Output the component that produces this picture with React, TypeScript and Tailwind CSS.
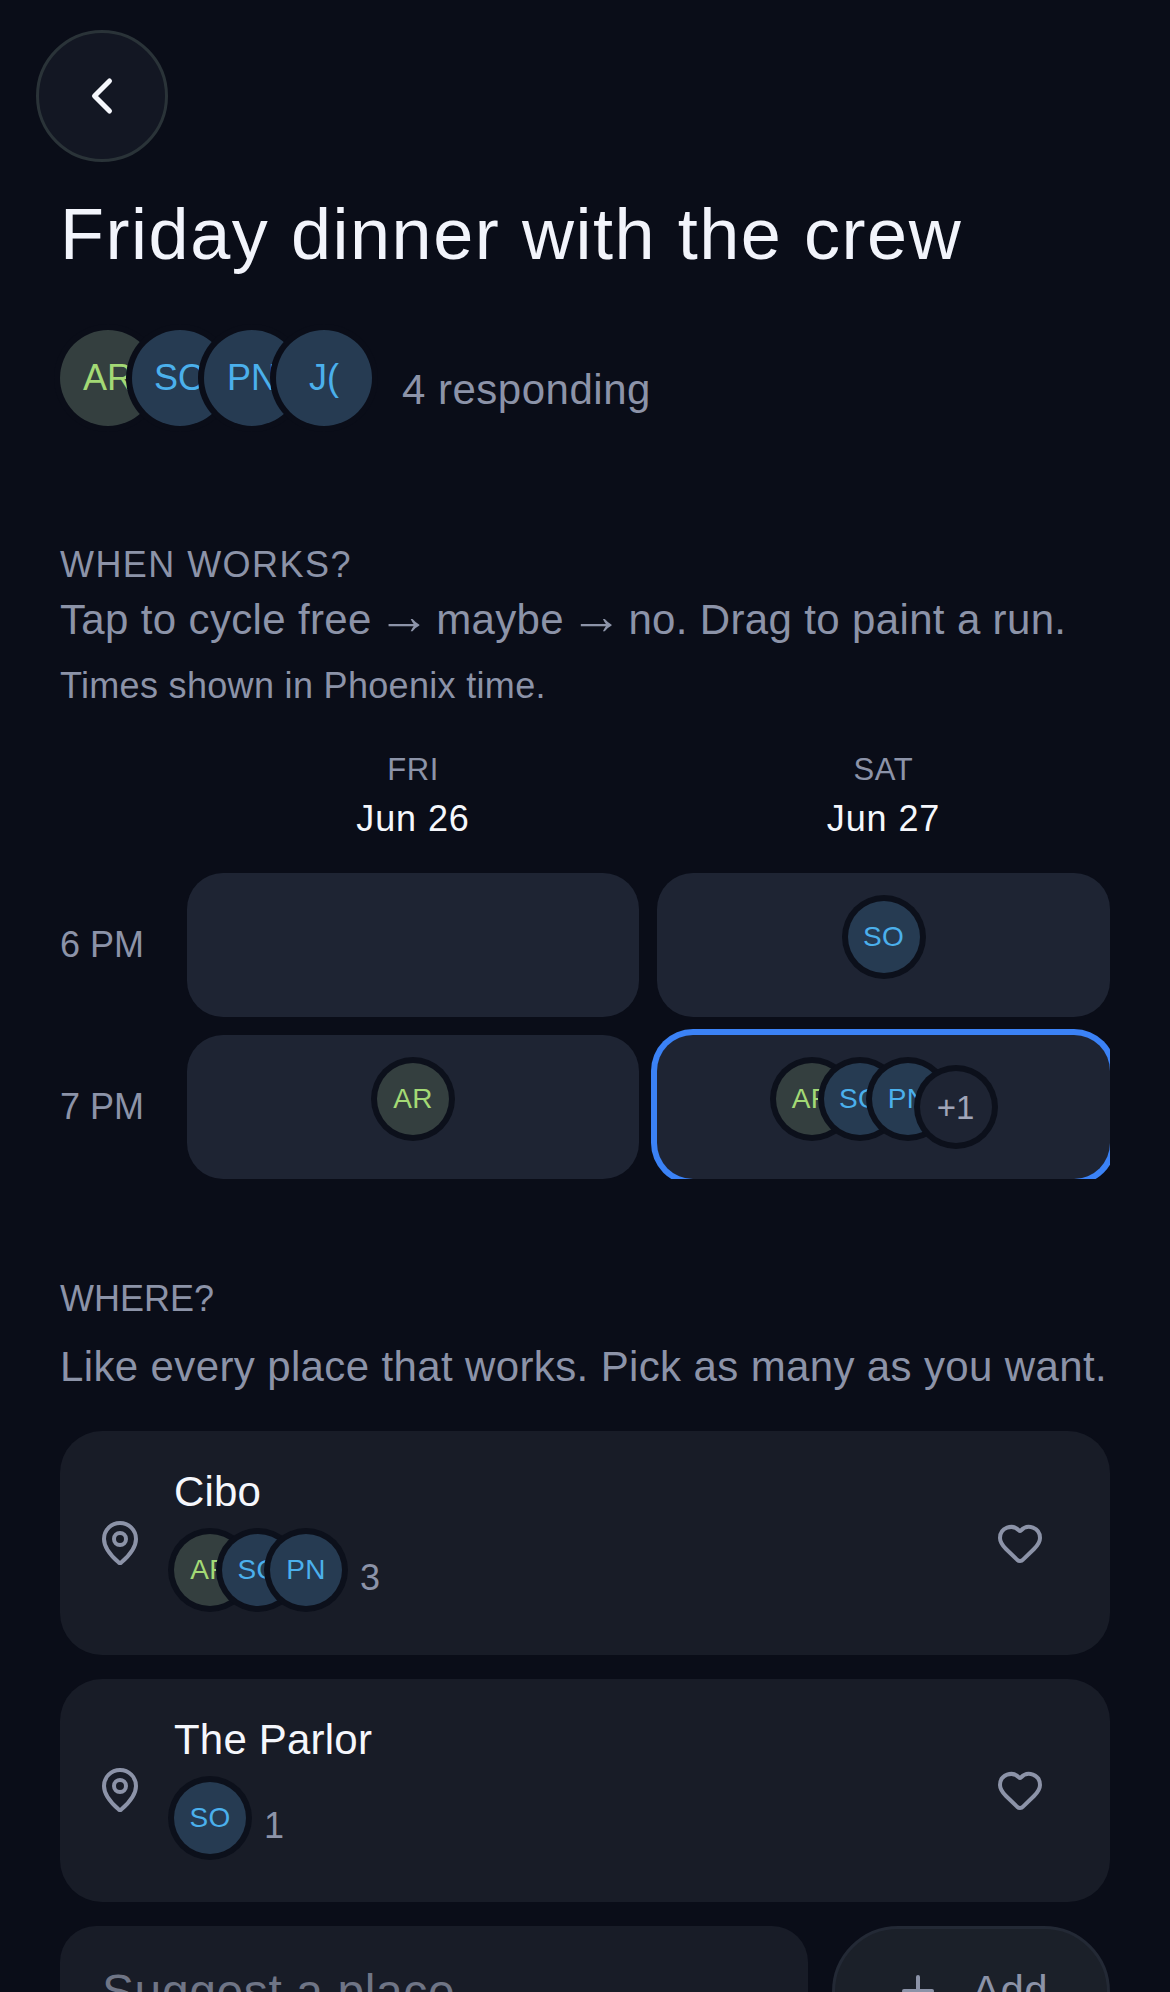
import { ChevronLeft, Heart, MapPin, Plus } from "lucide-react"

const GREEN = "bg-[#343f3f] text-[#a3d975]"
const BLUE = "bg-[#263b52] text-[#4bb0ec]"

function Avatar({ label, tone, first }: { label: string; tone: string; first?: boolean }) {
  return (
    <div
      className={`relative flex h-[72px] w-[72px] shrink-0 items-center justify-center rounded-full text-[28px] leading-none tracking-[0.3px] shadow-[0_0_0_6px_#0c101b] ${tone} ${first ? "" : "-ml-[24px]"}`}
    >
      {label}
    </div>
  )
}

function Slot({ children, selected }: { children?: React.ReactNode; selected?: boolean }) {
  return (
    <div
      className={`flex h-[144px] justify-center rounded-[36px] bg-[#1e2433] pt-[28px] ${selected ? "shadow-[0_0_0_6px_#3b82f6]" : ""}`}
    >
      {children}
    </div>
  )
}

function Place({ name, people }: { name: string; people: { label: string; tone: string }[] }) {
  return (
    <div className="flex h-[223.5px] items-center rounded-[42px] bg-[#181c27] pl-[36px] pr-[66px]">
      <MapPin size={48} strokeWidth={2} className="shrink-0 text-[#8c93a8]" />
      <div className="ml-[30px] flex-1 self-start pt-[31px]">
        <div className="text-[42px] leading-[60px] tracking-[0.2px] text-[#f5f7fc]">{name}</div>
        <div className="mt-[12px] flex items-start">
          {people.map((p, i) => (
            <Avatar key={p.label} label={p.label} tone={p.tone} first={i === 0} />
          ))}
          <span className="ml-[18px] mt-[17px] text-[36px] leading-[54px] text-[#8c93a8]">{people.length}</span>
        </div>
      </div>
      <Heart size={48} strokeWidth={2} className="shrink-0 text-[#8c93a8]" />
    </div>
  )
}

export default function App() {
  return (
    <div className="h-[1992px] w-[1170px] overflow-hidden bg-[#0a0d18] font-['Liberation_Sans',sans-serif]">
      <div className="pl-[36px] pt-[30px]">
        <button className="flex h-[132px] w-[132px] items-center justify-center rounded-full border-[3px] border-[#2a3338] bg-[#131723] text-[#f5f7fc]">
          <ChevronLeft size={60} strokeWidth={2} />
        </button>
      </div>

      <div className="px-[60px]">
        <h1 className="mt-[30px] text-[72px] font-normal leading-[84px] tracking-[1.55px] text-[#f2f4fb]">
          Friday dinner with the crew
        </h1>

        <div className="mt-[54px] flex items-start">
          {[
            { label: "AR", tone: GREEN },
            { label: "SO", tone: BLUE },
            { label: "PN", tone: BLUE },
            { label: "J(", tone: BLUE },
          ].map((p, i) => (
            <div
              key={p.label}
              className={`relative flex h-[96px] w-[96px] items-center justify-center rounded-full text-[36px] leading-none shadow-[0_0_0_6px_#0a0d18] ${p.tone} ${i === 0 ? "" : "-ml-[24px]"}`}
            >
              {p.label}
            </div>
          ))}
          <span className="ml-[30px] mt-[33px] text-[42px] leading-[54px] tracking-[0.5px] text-[#8c93a8]">4 responding</span>
        </div>

        <div className="mt-[115px] text-[36px] leading-[48px] tracking-[1.44px] text-[#8c93a8]">WHEN WORKS?</div>
        <p className="mt-[4px] text-[42px] leading-[54px] tracking-[0.35px] text-[#8c93a8]">
          Tap to cycle free <span className="-mx-[6px] text-[52px] leading-[0]">→</span> maybe <span className="-mx-[6px] text-[52px] leading-[0]">→</span> no. Drag to paint a run.
        </p>
        <p className="mt-[12px] text-[36px] leading-[54px] tracking-[0.32px] text-[#8c93a8]">Times shown in Phoenix time.</p>

        <div className="mt-[33px] overflow-hidden">
          <div className="grid grid-cols-[109px_452px_453px] gap-x-[18px] gap-y-[18px]">
            <div />
            <div className="mb-[12px] text-center">
              <div className="text-[31px] leading-[48px] tracking-[0.6px] text-[#8c93a8]">FRI</div>
              <div className="mt-[1px] text-[36px] leading-[48px] tracking-[0.9px] text-[#f5f7fc]">Jun 26</div>
            </div>
            <div className="mb-[12px] text-center">
              <div className="text-[31px] leading-[48px] tracking-[0.6px] text-[#8c93a8]">SAT</div>
              <div className="mt-[1px] text-[36px] leading-[48px] tracking-[0.9px] text-[#f5f7fc]">Jun 27</div>
            </div>

            <div className="self-center text-[36px] text-[#8c93a8]">6 PM</div>
            <Slot />
            <Slot>
              <Avatar label="SO" tone={BLUE} first />
            </Slot>

            <div className="self-center text-[36px] text-[#8c93a8]">7 PM</div>
            <Slot>
              <Avatar label="AR" tone={GREEN} first />
            </Slot>
            <Slot selected>
              <Avatar label="AR" tone={GREEN} first />
              <Avatar label="SO" tone={BLUE} />
              <Avatar label="PN" tone={BLUE} />
              <div className="relative -ml-[24px] mt-[8px] flex h-[72px] w-[72px] items-center justify-center rounded-full bg-[#1e2433] text-[33px] leading-none text-[#a0a5b8] shadow-[0_0_0_6px_#0c101b]">
                +1
              </div>
            </Slot>
          </div>
        </div>

        <div className="mt-[96px] text-[36px] leading-[48px] text-[#8c93a8]">WHERE?</div>
        <p className="mt-[17px] text-[42px] leading-[54px] tracking-[0.37px] text-[#8c93a8]">
          Like every place that works. Pick as many as you want.
        </p>

        <div className="mt-[37px] flex flex-col gap-[24px]">
          <Place
            name="Cibo"
            people={[
              { label: "AR", tone: GREEN },
              { label: "SO", tone: BLUE },
              { label: "PN", tone: BLUE },
            ]}
          />
          <Place name="The Parlor" people={[{ label: "SO", tone: BLUE }]} />
          <div className="flex gap-[24px]">
            <div className="flex h-[132px] flex-1 items-center rounded-[36px] bg-[#181c27] px-[42px] text-[48px] tracking-[0.6px] text-[#6f7586]">
              Suggest a place
            </div>
            <button className="flex h-[132px] w-[278px] items-center justify-center gap-[30px] rounded-[66px] border-[3px] border-[#232935] bg-[#1b2029] pb-[3px] text-[42px] tracking-[0.35px] text-[#8c93a8]">
              <Plus size={48} strokeWidth={2} />
              Add
            </button>
          </div>
        </div>
      </div>
    </div>
  )
}
